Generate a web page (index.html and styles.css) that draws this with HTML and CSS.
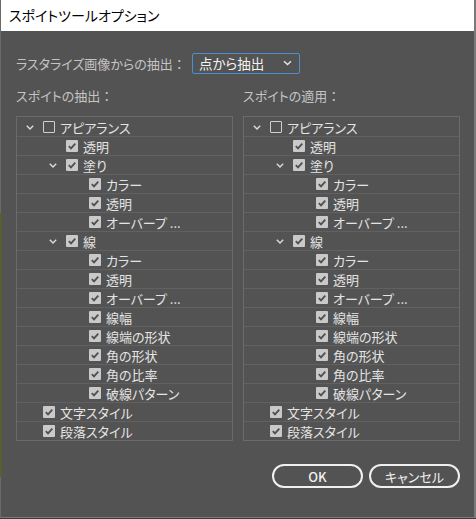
FILE: index.html
```html
<!DOCTYPE html>
<html lang="ja">
<head>
<meta charset="utf-8">
<title>スポイトツールオプション</title>
<link rel="stylesheet" href="styles.css">
</head>
<body>
<div class="desk-strip"></div>
<div class="window">
  <div class="titlebar">スポイトツールオプション</div>
  <div class="content">
    <div class="raster-row">
      <span class="label">ラスタライズ画像からの抽出<span class="colon">：</span></span>
      <div class="select">
        <span class="select-text">点から抽出</span>
        <svg class="select-chev" width="9" height="6" viewBox="0 0 9 6"><path d="M1 1.2 L4.5 4.6 L8 1.2" fill="none" stroke="#e6e6e6" stroke-width="1.4"/></svg>
      </div>
    </div>
    <div class="columns">
      <div class="col">
        <div class="col-title">スポイトの抽出<span class="colon">：</span></div>
        <div class="tree">
          <div class="row lvl0"><span class="chev"><svg width="8" height="5" viewBox="0 0 8 5"><path d="M0.8 0.8 L4 4 L7.2 0.8" fill="none" stroke="#dcdcdc" stroke-width="1.4"/></svg></span><span class="cb off"></span><span class="txt">アピアランス</span></div>
          <div class="row lvl1"><span class="chev"></span><span class="cb on"><svg width="12" height="12" viewBox="0 0 12 12"><path d="M2.8 6.2 L5 8.4 L9.3 3.6" fill="none" stroke="#4f4f4f" stroke-width="1.8"/></svg></span><span class="txt">透明</span></div>
          <div class="row lvl1"><span class="chev"><svg width="8" height="5" viewBox="0 0 8 5"><path d="M0.8 0.8 L4 4 L7.2 0.8" fill="none" stroke="#dcdcdc" stroke-width="1.4"/></svg></span><span class="cb on"><svg width="12" height="12" viewBox="0 0 12 12"><path d="M2.8 6.2 L5 8.4 L9.3 3.6" fill="none" stroke="#4f4f4f" stroke-width="1.8"/></svg></span><span class="txt">塗り</span></div>
          <div class="row lvl2"><span class="chev"></span><span class="cb on"><svg width="12" height="12" viewBox="0 0 12 12"><path d="M2.8 6.2 L5 8.4 L9.3 3.6" fill="none" stroke="#4f4f4f" stroke-width="1.8"/></svg></span><span class="txt">カラー</span></div>
          <div class="row lvl2"><span class="chev"></span><span class="cb on"><svg width="12" height="12" viewBox="0 0 12 12"><path d="M2.8 6.2 L5 8.4 L9.3 3.6" fill="none" stroke="#4f4f4f" stroke-width="1.8"/></svg></span><span class="txt">透明</span></div>
          <div class="row lvl2"><span class="chev"></span><span class="cb on"><svg width="12" height="12" viewBox="0 0 12 12"><path d="M2.8 6.2 L5 8.4 L9.3 3.6" fill="none" stroke="#4f4f4f" stroke-width="1.8"/></svg></span><span class="txt">オーバープ ...</span></div>
          <div class="row lvl1"><span class="chev"><svg width="8" height="5" viewBox="0 0 8 5"><path d="M0.8 0.8 L4 4 L7.2 0.8" fill="none" stroke="#dcdcdc" stroke-width="1.4"/></svg></span><span class="cb on"><svg width="12" height="12" viewBox="0 0 12 12"><path d="M2.8 6.2 L5 8.4 L9.3 3.6" fill="none" stroke="#4f4f4f" stroke-width="1.8"/></svg></span><span class="txt">線</span></div>
          <div class="row lvl2"><span class="chev"></span><span class="cb on"><svg width="12" height="12" viewBox="0 0 12 12"><path d="M2.8 6.2 L5 8.4 L9.3 3.6" fill="none" stroke="#4f4f4f" stroke-width="1.8"/></svg></span><span class="txt">カラー</span></div>
          <div class="row lvl2"><span class="chev"></span><span class="cb on"><svg width="12" height="12" viewBox="0 0 12 12"><path d="M2.8 6.2 L5 8.4 L9.3 3.6" fill="none" stroke="#4f4f4f" stroke-width="1.8"/></svg></span><span class="txt">透明</span></div>
          <div class="row lvl2"><span class="chev"></span><span class="cb on"><svg width="12" height="12" viewBox="0 0 12 12"><path d="M2.8 6.2 L5 8.4 L9.3 3.6" fill="none" stroke="#4f4f4f" stroke-width="1.8"/></svg></span><span class="txt">オーバープ ...</span></div>
          <div class="row lvl2"><span class="chev"></span><span class="cb on"><svg width="12" height="12" viewBox="0 0 12 12"><path d="M2.8 6.2 L5 8.4 L9.3 3.6" fill="none" stroke="#4f4f4f" stroke-width="1.8"/></svg></span><span class="txt">線幅</span></div>
          <div class="row lvl2"><span class="chev"></span><span class="cb on"><svg width="12" height="12" viewBox="0 0 12 12"><path d="M2.8 6.2 L5 8.4 L9.3 3.6" fill="none" stroke="#4f4f4f" stroke-width="1.8"/></svg></span><span class="txt">線端の形状</span></div>
          <div class="row lvl2"><span class="chev"></span><span class="cb on"><svg width="12" height="12" viewBox="0 0 12 12"><path d="M2.8 6.2 L5 8.4 L9.3 3.6" fill="none" stroke="#4f4f4f" stroke-width="1.8"/></svg></span><span class="txt">角の形状</span></div>
          <div class="row lvl2"><span class="chev"></span><span class="cb on"><svg width="12" height="12" viewBox="0 0 12 12"><path d="M2.8 6.2 L5 8.4 L9.3 3.6" fill="none" stroke="#4f4f4f" stroke-width="1.8"/></svg></span><span class="txt">角の比率</span></div>
          <div class="row lvl2"><span class="chev"></span><span class="cb on"><svg width="12" height="12" viewBox="0 0 12 12"><path d="M2.8 6.2 L5 8.4 L9.3 3.6" fill="none" stroke="#4f4f4f" stroke-width="1.8"/></svg></span><span class="txt">破線パターン</span></div>
          <div class="row lvl0"><span class="chev"></span><span class="cb on"><svg width="12" height="12" viewBox="0 0 12 12"><path d="M2.8 6.2 L5 8.4 L9.3 3.6" fill="none" stroke="#4f4f4f" stroke-width="1.8"/></svg></span><span class="txt">文字スタイル</span></div>
          <div class="row lvl0"><span class="chev"></span><span class="cb on"><svg width="12" height="12" viewBox="0 0 12 12"><path d="M2.8 6.2 L5 8.4 L9.3 3.6" fill="none" stroke="#4f4f4f" stroke-width="1.8"/></svg></span><span class="txt">段落スタイル</span></div>
        </div>
      </div>
      <div class="col">
        <div class="col-title">スポイトの適用<span class="colon">：</span></div>
        <div class="tree">
          <div class="row lvl0"><span class="chev"><svg width="8" height="5" viewBox="0 0 8 5"><path d="M0.8 0.8 L4 4 L7.2 0.8" fill="none" stroke="#dcdcdc" stroke-width="1.4"/></svg></span><span class="cb off"></span><span class="txt">アピアランス</span></div>
          <div class="row lvl1"><span class="chev"></span><span class="cb on"><svg width="12" height="12" viewBox="0 0 12 12"><path d="M2.8 6.2 L5 8.4 L9.3 3.6" fill="none" stroke="#4f4f4f" stroke-width="1.8"/></svg></span><span class="txt">透明</span></div>
          <div class="row lvl1"><span class="chev"><svg width="8" height="5" viewBox="0 0 8 5"><path d="M0.8 0.8 L4 4 L7.2 0.8" fill="none" stroke="#dcdcdc" stroke-width="1.4"/></svg></span><span class="cb on"><svg width="12" height="12" viewBox="0 0 12 12"><path d="M2.8 6.2 L5 8.4 L9.3 3.6" fill="none" stroke="#4f4f4f" stroke-width="1.8"/></svg></span><span class="txt">塗り</span></div>
          <div class="row lvl2"><span class="chev"></span><span class="cb on"><svg width="12" height="12" viewBox="0 0 12 12"><path d="M2.8 6.2 L5 8.4 L9.3 3.6" fill="none" stroke="#4f4f4f" stroke-width="1.8"/></svg></span><span class="txt">カラー</span></div>
          <div class="row lvl2"><span class="chev"></span><span class="cb on"><svg width="12" height="12" viewBox="0 0 12 12"><path d="M2.8 6.2 L5 8.4 L9.3 3.6" fill="none" stroke="#4f4f4f" stroke-width="1.8"/></svg></span><span class="txt">透明</span></div>
          <div class="row lvl2"><span class="chev"></span><span class="cb on"><svg width="12" height="12" viewBox="0 0 12 12"><path d="M2.8 6.2 L5 8.4 L9.3 3.6" fill="none" stroke="#4f4f4f" stroke-width="1.8"/></svg></span><span class="txt">オーバープ ...</span></div>
          <div class="row lvl1"><span class="chev"><svg width="8" height="5" viewBox="0 0 8 5"><path d="M0.8 0.8 L4 4 L7.2 0.8" fill="none" stroke="#dcdcdc" stroke-width="1.4"/></svg></span><span class="cb on"><svg width="12" height="12" viewBox="0 0 12 12"><path d="M2.8 6.2 L5 8.4 L9.3 3.6" fill="none" stroke="#4f4f4f" stroke-width="1.8"/></svg></span><span class="txt">線</span></div>
          <div class="row lvl2"><span class="chev"></span><span class="cb on"><svg width="12" height="12" viewBox="0 0 12 12"><path d="M2.8 6.2 L5 8.4 L9.3 3.6" fill="none" stroke="#4f4f4f" stroke-width="1.8"/></svg></span><span class="txt">カラー</span></div>
          <div class="row lvl2"><span class="chev"></span><span class="cb on"><svg width="12" height="12" viewBox="0 0 12 12"><path d="M2.8 6.2 L5 8.4 L9.3 3.6" fill="none" stroke="#4f4f4f" stroke-width="1.8"/></svg></span><span class="txt">透明</span></div>
          <div class="row lvl2"><span class="chev"></span><span class="cb on"><svg width="12" height="12" viewBox="0 0 12 12"><path d="M2.8 6.2 L5 8.4 L9.3 3.6" fill="none" stroke="#4f4f4f" stroke-width="1.8"/></svg></span><span class="txt">オーバープ ...</span></div>
          <div class="row lvl2"><span class="chev"></span><span class="cb on"><svg width="12" height="12" viewBox="0 0 12 12"><path d="M2.8 6.2 L5 8.4 L9.3 3.6" fill="none" stroke="#4f4f4f" stroke-width="1.8"/></svg></span><span class="txt">線幅</span></div>
          <div class="row lvl2"><span class="chev"></span><span class="cb on"><svg width="12" height="12" viewBox="0 0 12 12"><path d="M2.8 6.2 L5 8.4 L9.3 3.6" fill="none" stroke="#4f4f4f" stroke-width="1.8"/></svg></span><span class="txt">線端の形状</span></div>
          <div class="row lvl2"><span class="chev"></span><span class="cb on"><svg width="12" height="12" viewBox="0 0 12 12"><path d="M2.8 6.2 L5 8.4 L9.3 3.6" fill="none" stroke="#4f4f4f" stroke-width="1.8"/></svg></span><span class="txt">角の形状</span></div>
          <div class="row lvl2"><span class="chev"></span><span class="cb on"><svg width="12" height="12" viewBox="0 0 12 12"><path d="M2.8 6.2 L5 8.4 L9.3 3.6" fill="none" stroke="#4f4f4f" stroke-width="1.8"/></svg></span><span class="txt">角の比率</span></div>
          <div class="row lvl2"><span class="chev"></span><span class="cb on"><svg width="12" height="12" viewBox="0 0 12 12"><path d="M2.8 6.2 L5 8.4 L9.3 3.6" fill="none" stroke="#4f4f4f" stroke-width="1.8"/></svg></span><span class="txt">破線パターン</span></div>
          <div class="row lvl0"><span class="chev"></span><span class="cb on"><svg width="12" height="12" viewBox="0 0 12 12"><path d="M2.8 6.2 L5 8.4 L9.3 3.6" fill="none" stroke="#4f4f4f" stroke-width="1.8"/></svg></span><span class="txt">文字スタイル</span></div>
          <div class="row lvl0"><span class="chev"></span><span class="cb on"><svg width="12" height="12" viewBox="0 0 12 12"><path d="M2.8 6.2 L5 8.4 L9.3 3.6" fill="none" stroke="#4f4f4f" stroke-width="1.8"/></svg></span><span class="txt">段落スタイル</span></div>
        </div>
      </div>
    </div>
    <div class="buttons">
      <button class="btn btn-ok">OK</button>
      <button class="btn btn-cancel">キャンセル</button>
    </div>
  </div>
</div>
</body>
</html>
```
FILE: styles.css
```css
* { box-sizing: border-box; }
html, body { margin: 0; padding: 0; }
body {
  width: 476px;
  height: 519px;
  background: #3a3a3a;
  font-family: "Noto Sans CJK JP", "Noto Sans", sans-serif;
  font-feature-settings: "palt";
  position: relative;
  overflow: hidden;
}
.desk-strip {
  position: absolute;
  left: 0;
  top: 213px;
  width: 2px;
  height: 264px;
  background: #56602f;
  z-index: 2;
}
.window {
  width: 476px;
  height: 518px;
  background: #535353;
  border-left: 1px solid #6a6a6a;
  border-right: 2px solid #7a7a7a;
  border-bottom: 1px solid #7d7d7d;
  display: flex;
  flex-direction: column;
}
.titlebar {
  height: 31px;
  background: #ffffff;
  color: #000;
  font-size: 14px;
  line-height: 31px;
  padding-left: 8px;
  flex: none;
}
.content {
  padding: 22px 14px 0 15px;
  display: flex;
  flex-direction: column;
}
.raster-row {
  display: flex;
  align-items: center;
  height: 20px;
}
.label {
  color: #c4c4c4;
  font-size: 13px;
  width: 176px;
  white-space: nowrap;
}
.colon {
  font-feature-settings: normal;
}
.select {
  width: 108px;
  height: 21px;
  border: 1px solid #4d8fd4;
  border-radius: 2px;
  display: flex;
  align-items: center;
  justify-content: space-between;
  padding: 0 7px 0 6px;
}
.select-text {
  color: #f2f2f2;
  font-size: 13.5px;
}
.select-chev { display: block; }
.columns {
  display: flex;
  gap: 10px;
  margin-top: 13px;
}
.col { width: 217px; }
.col-title {
  color: #c4c4c4;
  font-size: 13px;
  height: 20px;
  line-height: 20px;
  margin-bottom: 10px;
  white-space: nowrap;
}
.tree {
  border: 1px solid #6a6a6a;
  padding-top: 1px;
}
.row {
  height: 19px;
  border-bottom: 1px solid #616161;
  display: flex;
  align-items: center;
  padding-left: 3px;
}
.row:last-child { border-bottom: none; height: 18px; }
.row.lvl1 { padding-left: 26px; }
.row.lvl2 { padding-left: 49px; }
.chev {
  width: 23px;
  flex: none;
  display: flex;
  align-items: center;
  padding-left: 6px;
}
.chev svg { display: block; }
.cb {
  width: 12px;
  height: 12px;
  flex: none;
  display: block;
  border-radius: 1px;
}
.cb.on { background: #c9c9c9; }
.cb.off { border: 1px solid #cfcfcf; }
.cb svg { display: block; }
.txt {
  color: #e4e4e4;
  font-size: 13px;
  margin-left: 5px;
  white-space: nowrap;
}
.buttons {
  display: flex;
  justify-content: flex-end;
  gap: 6px;
  margin-top: 23px;
}
.btn {
  height: 24px;
  border: 2px solid #f0f0f0;
  border-radius: 12px;
  background: transparent;
  color: #f0f0f0;
  font-family: "Noto Sans CJK JP", "Noto Sans", sans-serif;
  font-feature-settings: "palt";
  font-size: 13px;
  padding: 0;
  display: flex;
  align-items: center;
  justify-content: center;
}
.btn-ok { width: 91px; font-weight: 500; }
.btn-cancel { width: 91px; }
```
